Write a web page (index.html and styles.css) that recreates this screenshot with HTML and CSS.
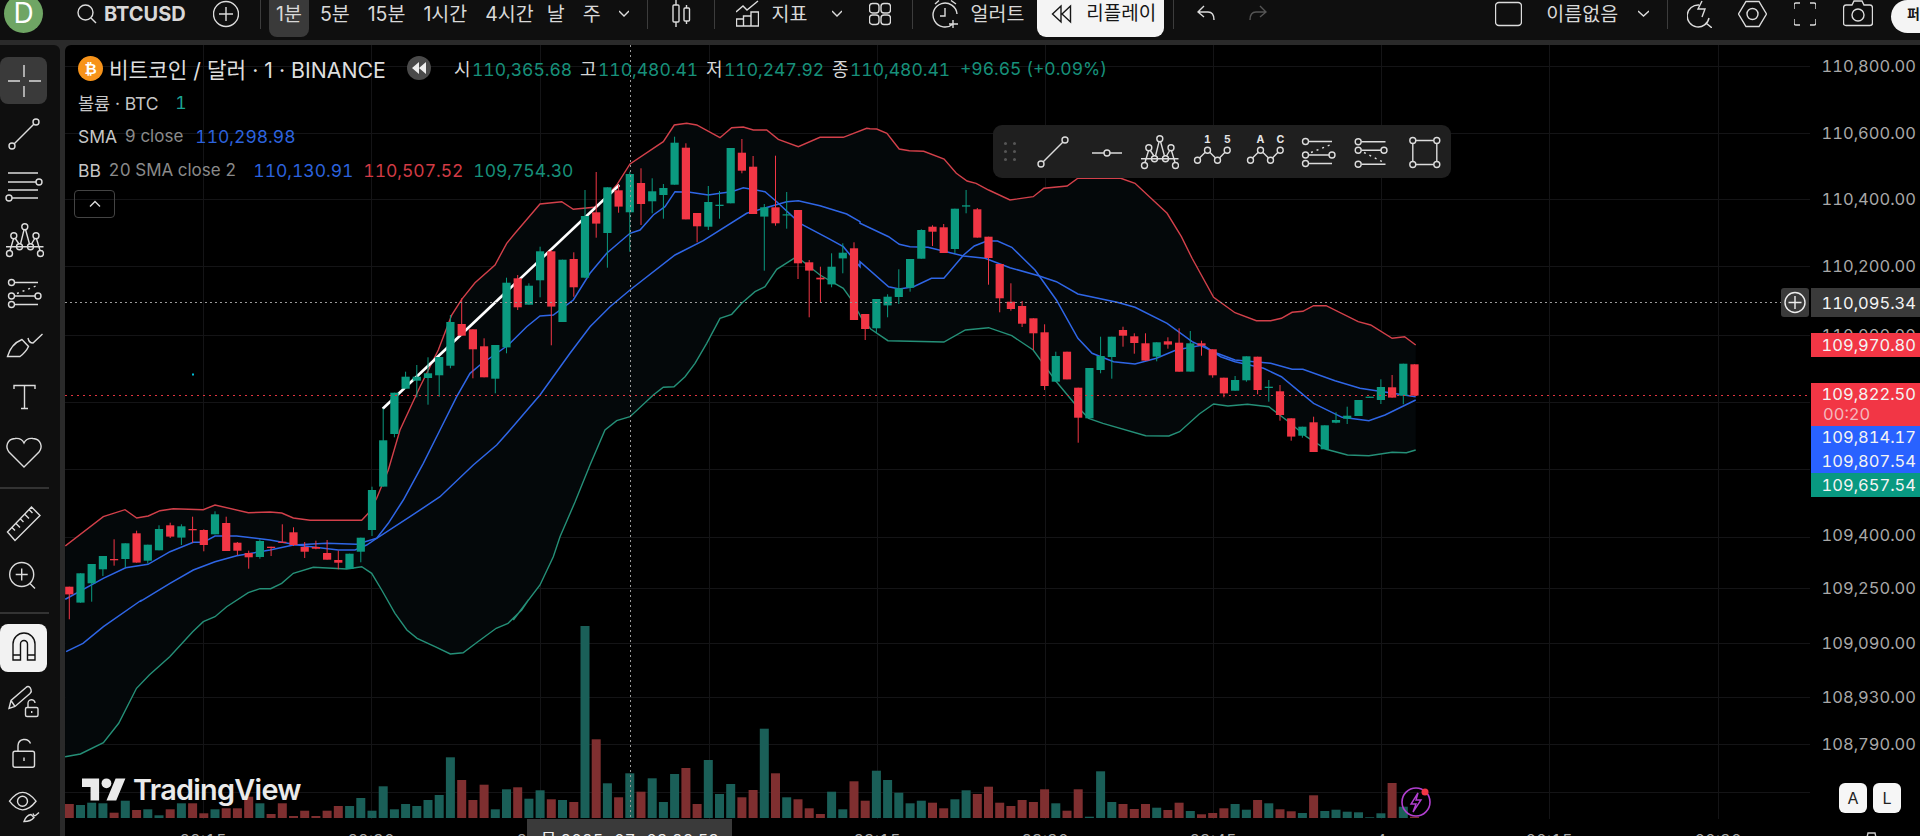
FILE: index.html
```html
<!DOCTYPE html>
<html lang="ko">
<head>
<meta charset="utf-8">
<title>BTCUSD</title>
<link rel="stylesheet" href="styles.css">
</head>
<body>
<svg class="defs" width="0" height="0" aria-hidden="true">
  <symbol id="s-line" viewBox="0 0 40 40"><path d="M10 30 30 10"/><circle cx="8" cy="32" r="3"/><circle cx="32" cy="8" r="3"/></symbol>
  <symbol id="s-crown" viewBox="0 0 40 40"><path d="M2 26.8H39.500M6 30.500 9.500 18.800M11 18 15 24M16.500 24 20 9.800M21.600 9.800 25.500 24M27.500 24 31 18M32.500 18.800 36 30.500"/><circle cx="20.800" cy="6.800" r="3"/><circle cx="9.800" cy="15.800" r="3"/><circle cx="32" cy="15.800" r="3"/><circle cx="15.500" cy="26.800" r="3"/><circle cx="26.500" cy="26.800" r="3"/><circle cx="5.500" cy="33.500" r="3"/><circle cx="36.500" cy="33.500" r="3"/></symbol>
  <symbol id="s-chan" viewBox="0 0 40 40"><path d="M10.500 9.500H34M10.500 23H31M10.500 31.500H34"/><path class="dotted" d="M13 20.500 33 12.500"/><circle cx="7.500" cy="9.500" r="3"/><circle cx="7.500" cy="23" r="3"/><circle cx="34" cy="23" r="3"/><circle cx="7.500" cy="31.500" r="3"/></symbol>
</svg>

<header class="topbar">
  <div class="avatar">D</div>
  <svg class="ic-top w20 ml34" viewBox="0 0 20 28"><circle cx="8.500" cy="12.500" r="7.500"/><path d="M14 18 19 23"/></svg>
  <div class="tb tb-symbol ml7">BTCUSD</div>
  <svg class="ic-top w26 ml27" viewBox="0 0 26 28"><circle cx="13" cy="14" r="12.500"/><path d="M13 7V21M6 14H20"/></svg>
  <i class="sep ml21"></i>
  <nav class="intervals ml8">
    <div class="tb iv iv-on">1분</div>
    <div class="tb iv">5분</div>
    <div class="tb iv">15분</div>
    <div class="tb iv">1시간</div>
    <div class="tb iv">4시간</div>
    <div class="tb iv iv-day">날</div>
    <div class="tb iv">주</div>
  </nav>
  <svg class="ic-top w10 ml11" viewBox="0 0 10 28"><path d="M0 11 5 16 10 11"/></svg>
  <i class="sep ml18"></i>
  <svg class="ic-top w19 ml24" viewBox="0 0 19 28"><path d="M4 0V5M4 22V27M14.500 5V8M14.500 21V24"/><rect x="1" y="5" width="6" height="17" rx="1"/><rect x="12" y="8" width="5.500" height="13" rx="1"/></svg>
  <i class="sep ml23"></i>
  <svg class="ic-top w23 ml21" viewBox="0 0 23 28"><path d="M0 12 7 6 11 10 22 1M.500 19H7.500V26H.500ZM7.500 16H15V26H7.500ZM15 12H22.500V26H15Z"/></svg>
  <div class="tb ml13">지표</div>
  <svg class="ic-top w10 ml24" viewBox="0 0 10 28"><path d="M0 11 5 16 10 11"/></svg>
  <svg class="ic-top w22 ml27" viewBox="0 0 22 28"><rect x=".500" y="3.500" width="9.500" height="9.500" rx="3"/><rect x="12" y="3.500" width="9.500" height="9.500" rx="3"/><rect x=".500" y="15" width="9.500" height="9.500" rx="3"/><rect x="12" y="15" width="9.500" height="9.500" rx="3"/></svg>
  <i class="sep ml21"></i>
  <svg class="ic-top w27 ml19" viewBox="0 0 27 28"><path d="M21 24A12 12 0 1 1 25 14M13 8V16H8M3 4 7 .500M19 .500 24 4M21 20V28M17 24H26"/></svg>
  <div class="tb ml12">얼러트</div>
  <div class="replay ml13">
    <svg class="ic-dark" width="21" height="28" viewBox="0 0 21 28"><path d="M10 6 1.500 14 10 22ZM19.500 6 11 14 19.500 22Z"/></svg>
    <span>리플레이</span>
  </div>
  <i class="sep ml9"></i>
  <svg class="ic-top w18 ml23" viewBox="0 0 18 28"><path d="M7 6 1 12 7 17M1 12H11Q17 12 17 20"/></svg>
  <svg class="ic-top ic-dim w18 ml34" viewBox="0 0 18 28"><path d="M11 6 17 12 11 17M17 12H7Q1 12 1 20"/></svg>
  <svg class="ic-top w27 ml228" viewBox="0 0 27 28"><rect x=".500" y="2.500" width="26" height="23" rx="3.500"/></svg>
  <div class="tb ml24">이름없음</div>
  <svg class="ic-top w11 ml20" viewBox="0 0 11 28"><path d="M0 11 5.500 16 11 11"/></svg>
  <i class="sep ml18"></i>
  <svg class="ic-top w25 ml19" viewBox="0 0 25 28"><path d="M12 5A11 11 0 1 0 22 18M19 23 25 28M15 1 11 9H18L15 17"/></svg>
  <svg class="ic-top w29 ml26" viewBox="0 0 29 28"><path d="M8 1.500H21L28.500 14 21 26.500H8L.500 14Z"/><circle cx="14.500" cy="14" r="5.500"/></svg>
  <svg class="ic-top w22 ml27" viewBox="0 0 22 28"><path d="M0 9V5Q0 3 2 3H6M16 3H20Q22 3 22 5V9M22 19V23Q22 25 20 25H16M6 25H2Q0 25 0 23V19"/></svg>
  <svg class="ic-top w30 ml27" viewBox="0 0 30 28"><path d="M3 5H9L11 1H19L21 5H27Q29.500 5 29.500 8V23Q29.500 25.500 27 25.500H3Q.500 25.500 .500 23V8Q.500 5 3 5Z"/><circle cx="15" cy="15" r="6"/></svg>
  <div class="publish ml18">퍼블리시</div>
</header>

<div class="workspace">
  <aside class="tools">
    <div class="tool tool-on"><svg class="tool-ic" viewBox="0 0 47 47"><path d="M24 8V20M24 29V40M8 24H20M29 24H41"/></svg></div>
    <div class="tool"><svg class="ic40"><use href="#s-line"/></svg></div>
    <div class="tool"><svg class="tool-ic tall" viewBox="0 0 47 53"><path d="M8 13H38M8 22H36M8 30H38M12 38H38"/><circle cx="39" cy="22" r="3"/><circle cx="9" cy="38" r="3"/></svg></div>
    <div class="tool"><svg class="ic40"><use href="#s-crown"/></svg></div>
    <div class="tool"><svg class="ic40"><use href="#s-chan"/></svg></div>
    <div class="tool"><svg class="tool-ic tall" viewBox="0 0 47 53"><path d="M7.500 37.500Q11 25 22 20.500L28.500 27.500Q26 33 20 37.500ZM28 19Q29 24 33 24L42.500 15"/></svg></div>
    <div class="tool"><svg class="tool-ic tall" viewBox="0 0 47 53"><path d="M14 17V13.500H35V17M24.500 13.500V36.500M21 36.500H28"/></svg></div>
    <div class="tool tool-short"><svg class="tool-ic short" viewBox="0 0 47 44"><path d="M24 40 9 25C5 20 7 12 15 11.500 19 11 22.500 13 24 16 25.500 13 29 11 33 11.500 41 12 43 20 39 25Z"/></svg></div>
    <i class="rule rule-a"></i>
    <div class="tool tool-b"><svg class="tool-ic tall" viewBox="0 0 47 52"><path d="M7.500 34.500 31.500 9.500 40 18 15 43ZM12 30 15 33M16 26 20 30M20.500 21.500 23.500 24.500M25 17 29 21M29.500 12.500 32.500 15.500"/></svg></div>
    <div class="tool tool-b"><svg class="tool-ic tall" viewBox="0 0 47 52"><circle cx="21.700" cy="25" r="12"/><path d="M30 34 35 39M21.700 19V31M15.700 25H27.700"/></svg></div>
    <i class="rule rule-b"></i>
    <div class="tool tool-magnet"><svg class="tool-ic mag" viewBox="0 0 47 48"><path d="M13 36V20A11 11 0 0 1 35 20V36H27.500V20A3.500 3.500 0 0 0 20.500 20V36ZM13 31H20.500M27.500 31H35"/></svg></div>
    <div class="tool tool-c"><svg class="tool-ic tall" viewBox="0 0 47 52"><path d="M9 32 11 24 26 11Q28 9 30 11L31 13Q32 15 30 17L15 30ZM11 24 15 30"/><rect x="25.500" y="31" width="12.500" height="9" rx="1.500"/><path d="M28 31V27A3.500 3.500 0 0 1 35 26.500M31.700 34.500V36.500"/></svg></div>
    <div class="tool tool-b"><svg class="tool-ic tall" viewBox="0 0 47 52"><rect x="13" y="22.700" width="21.500" height="16" rx="2"/><path d="M18 22.700V17A6.500 6.500 0 0 1 30.500 15M24 29V32.500"/></svg></div>
    <div class="tool tool-b"><svg class="tool-ic tall" viewBox="0 0 47 52"><path d="M9.500 20.700Q22.500 3 36 20.700 22.500 38 9.500 20.700Z"/><circle cx="22.500" cy="20.700" r="5"/><path d="M24 41Q26 35 31 34L34 37Q31 41 24 41ZM33 33Q34 36 35.500 35L39 32"/></svg></div>
  </aside>

  <main class="chart-pane">
    <svg id="chart" class="chart" viewBox="65 45 1855 791" width="1855" height="791"></svg>

    <section class="legend">
      <div class="legend-row legend-main">
        <span class="coin">₿</span>
        <span class="pair">비트코인 / 달러 · 1 · BINANCE</span>
        <span class="replay-dot"><svg width="14" height="12" viewBox="0 0 14 12"><path d="M7 0 0 6 7 12ZM14 0 7 6 14 12Z"/></svg></span>
        <span class="ohlc"><b>시</b><em class="num green">110,365.68</em></span>
        <span class="ohlc"><b>고</b><em class="num green">110,480.41</em></span>
        <span class="ohlc"><b>저</b><em class="num green">110,247.92</em></span>
        <span class="ohlc"><b>종</b><em class="num green">110,480.41</em></span>
        <em class="num green change">+96.65 (+0.09%)</em>
      </div>
      <div class="legend-row">볼륨 · BTC <em class="num teal val-a">1</em></div>
      <div class="legend-row">SMA <span class="muted">9 close</span><em class="num blue val-sma">110,298.98</em></div>
      <div class="legend-row">BB <span class="muted">20 SMA close 2</span><em class="num blue val-first val-c">110,130.91</em><em class="num red val-c">110,507.52</em><em class="num green val-c">109,754.30</em></div>
      <div class="collapse"><svg width="12" height="8" viewBox="0 0 12 8"><path d="M1 6.500 6 1.500 11 6.500"/></svg></div>
    </section>

    <div class="drawbar">
      <div class="grip"><i></i><i></i><i></i><i></i><i></i><i></i></div>
      <div class="db"><svg class="ic40"><use href="#s-line"/></svg></div>
      <div class="db"><svg class="ic40" viewBox="0 0 40 40"><path d="M6 21H18M24 21H36"/><circle cx="21" cy="21" r="3"/></svg></div>
      <div class="db"><svg class="ic40"><use href="#s-crown"/></svg></div>
      <div class="db"><svg class="ic40" viewBox="0 0 40 40"><path d="M7.500 26 13.500 20M17.500 20 23.500 26M27.500 26 33.200 20"/><circle cx="5.500" cy="28.200" r="3"/><circle cx="15.500" cy="18.200" r="3"/><circle cx="25.500" cy="28.200" r="3"/><circle cx="35.200" cy="18.200" r="3"/><text class="db-label" x="15.500" y="10.500">1</text><text class="db-label" x="35.500" y="10.500">5</text></svg></div>
      <div class="db"><svg class="ic40" viewBox="0 0 40 40"><path d="M7.500 26 13.500 20M17.500 20 23.500 26M27.500 26 33.200 20"/><circle cx="5.500" cy="28.200" r="3"/><circle cx="15.500" cy="18.200" r="3"/><circle cx="25.500" cy="28.200" r="3"/><circle cx="35.200" cy="18.200" r="3"/><text class="db-label" x="15.500" y="10.500">A</text><text class="db-label" x="35.500" y="10.500">C</text></svg></div>
      <div class="db"><svg class="ic40"><use href="#s-chan"/></svg></div>
      <div class="db"><svg class="ic40" viewBox="0 0 40 40"><path d="M10.500 9.800H34.500M10.500 18.200H30M10.500 32.200H34.500"/><path class="dotted" d="M13 20.500 33 30.500"/><circle cx="7.200" cy="9.800" r="3"/><circle cx="7.200" cy="18.200" r="3"/><circle cx="33" cy="18.200" r="3"/><circle cx="7.200" cy="32.200" r="3"/></svg></div>
      <div class="db"><svg class="ic40" viewBox="0 0 40 40"><path d="M11.800 8.500H29.800M11.800 32.500H29.800M8.800 11.500V29.500M32.800 11.500V29.500"/><circle cx="8.800" cy="8.500" r="3"/><circle cx="32.800" cy="8.500" r="3"/><circle cx="8.800" cy="32.500" r="3"/><circle cx="32.800" cy="32.500" r="3"/></svg></div>
    </div>

    <div class="watermark">
      <svg class="tv-logo" width="44" height="24" viewBox="0 4 36 19"><path d="M14 22H7V11H0V4h14v18zM28 22h-8l7.500-18h8L28 22z"/><circle cx="20" cy="8" r="4"/></svg>
      <span>TradingView</span>
    </div>

    <div class="scale-btns"><span>A</span><span>L</span></div>
  </main>
</div>
<script src="chart.js"></script>
</body>
</html>
```
FILE: styles.css
```css
* { box-sizing: border-box; }
html, body { margin: 0; height: 100%; }
body {
  width: 1920px; height: 836px; overflow: hidden;
  background: #2a2a2a; color: #d6d6d6;
  font-family: Inter, "Noto Sans CJK KR", "Noto Sans", sans-serif;
  font-variant-numeric: tabular-nums;
  display: flex; flex-direction: column; gap: 5px;
}
em { font-style: normal; }
.defs { position: absolute; }
.defs, .ic40, .tool-ic, .ic-top { fill: none; stroke: #dcdcdc; stroke-width: 1.4; }
.dotted { stroke-dasharray: 2 4; }

/* Top bar */
.topbar { flex: 0 0 40px; height: 40px; display: flex; align-items: flex-start; background: #0f0f0f; overflow: hidden; }
.topbar > * { flex-shrink: 0; }
.avatar { width: 39px; height: 39px; margin: -6px 0 0 4px; border-radius: 50%; background: #6fa564; color: #fff; font-size: 28px; line-height: 39px; text-align: center; }
.tb { height: 37px; line-height: 28px; font-size: 19.5px; color: #d8d8d8; font-variant-numeric: normal; }
.tb-symbol { font-weight: 700; font-size: 20px; width: 82px; }
.ic-top { height: 28px; display: block; }
.ic-dim { stroke: #555; }
.w10 { width: 10px; } .w11 { width: 11px; } .w18 { width: 18px; } .w19 { width: 19px; } .w20 { width: 20px; } .w22 { width: 22px; }
.w23 { width: 23px; } .w25 { width: 25px; } .w26 { width: 26px; } .w27 { width: 27px; } .w29 { width: 29px; } .w30 { width: 30px; }
.ml7 { margin-left: 7px; } .ml8 { margin-left: 8px; } .ml9 { margin-left: 9px; } .ml11 { margin-left: 11px; } .ml12 { margin-left: 12px; } .ml13 { margin-left: 13px; }
.ml18 { margin-left: 18px; } .ml19 { margin-left: 19px; } .ml20 { margin-left: 20px; } .ml21 { margin-left: 21px; } .ml23 { margin-left: 23px; } .ml24 { margin-left: 24px; }
.ml26 { margin-left: 26px; } .ml27 { margin-left: 27px; } .ml34 { margin-left: 34px; } .ml228 { margin-left: 228px; }
.sep { width: 1px; height: 29px; background: #3c3c3c; display: block; }
.intervals { display: flex; gap: 4px; }
.iv { padding: 0 7px; }
.iv-day { padding-left: 2px; }
.iv-on { background: #3a3a3a; border-radius: 0 0 8px 8px; }
.replay { width: 127px; height: 37px; background: #f4f4f4; border-radius: 0 0 9px 9px; color: #161616; font-size: 19px; line-height: 28px; display: flex; align-items: flex-start; padding-left: 14px; gap: 14px; white-space: nowrap; }
.ic-dark { fill: none; stroke: #161616; stroke-width: 1.4; display: block; }
.publish { width: 60px; height: 33px; padding-left: 16px; border-radius: 17px 0 0 17px; background: #f4f4f4; color: #161616; font-size: 14px; font-weight: 700; line-height: 28px; white-space: nowrap; overflow: hidden; }

/* Left toolbar */
.workspace { flex: 1; display: flex; gap: 5px; min-height: 0; }
.tools { flex: 0 0 60px; background: #0f0f0f; border-radius: 0 6px 0 0; padding-top: 12px; display: flex; flex-direction: column; }
.tool { width: 47px; height: 53px; display: flex; align-items: center; justify-content: center; flex-shrink: 0; }
.tool-on { height: 47px; background: #3a3a3a; border-radius: 8px; margin-bottom: 3px; }
.tool-short { height: 44px; margin-top: 2px; }
.tool-b { height: 52px; }
.tool-c { height: 52px; margin-top: 4px; }
.tool-magnet { height: 48px; background: #f2f2f2; border-radius: 8px; }
.tool-ic { width: 47px; height: 47px; display: block; flex-shrink: 0; }
.tool-ic.tall { height: 53px; }
.tool-ic.short { height: 44px; }
.tool-ic.mag { height: 48px; stroke: #111; }
.ic40 { width: 40px; height: 40px; display: block; flex-shrink: 0; overflow: visible; }
.rule { display: block; height: 2px; background: #333; width: 49px; flex-shrink: 0; }
.rule-a { margin: 16px 0 8px; }
.rule-b { margin: 11px 0 10px; }

/* Chart */
.chart-pane { position: relative; flex: 1; background: #000; border-radius: 6px 0 0 0; overflow: hidden; }
.chart { display: block; }
.axis-text { font-size: 16.5px; fill: #a8a8a8; text-anchor: end; }
.tag-text { font-size: 16.5px; fill: #f4f4f4; text-anchor: end; }
.tag-sub { font-size: 16.5px; fill: #f4b8bd; }
.time-text { font-size: 16.5px; fill: #a8a8a8; text-anchor: middle; }
.time-tip { font-size: 16.5px; fill: #f0f0f0; }

/* Legend */
.legend { position: absolute; left: 13px; top: 6px; display: flex; flex-direction: column; font-size: 17.5px; color: #c6c6c6; }
.legend-row { height: 34px; display: flex; align-items: center; white-space: pre; }
.num { font-size: 17.5px; }
.coin { width: 25px; height: 25px; border-radius: 50%; background: #f7931a; color: #fff; font: 700 15px/25px "Liberation Sans", sans-serif; text-align: center; flex-shrink: 0; }
.pair { font-size: 21.3px; margin-left: 6px; color: #dedede; width: 298px; font-variant-numeric: normal; }
.replay-dot { width: 24px; height: 24px; border-radius: 50%; background: #4a4a4a; display: flex; align-items: center; justify-content: center; fill: #eee; flex-shrink: 0; }
.ohlc { display: flex; align-items: baseline; margin-left: 23px; }
.ohlc + .ohlc { margin-left: 0; }
.ohlc b { font-weight: 400; font-size: 18px; color: #d6d6d6; width: 18px; }
.ohlc em { width: 108px; }
.green { color: #17907a; }
.teal { color: #1ba493; }
.blue { color: #2c62dd; }
.red { color: #d23b45; }
.muted { color: #8a8a8a; margin-left: 3px; font-size: 17px; }
.val-a { margin-left: 12px; }
.val-sma { margin-left: 12px; }
.val-first { margin-left: 17px; }
.val-c { width: 110px; }
.change { margin-left: 2px; }
.collapse { width: 41px; height: 28px; margin: 3px 0 0 -4px; border: 1px solid #444; border-radius: 4px; display: flex; align-items: center; justify-content: center; fill: none; stroke: #dcdcdc; stroke-width: 1.4; }

/* Floating drawing toolbar */
.drawbar { position: absolute; left: 928px; top: 80px; width: 458px; height: 53px; background: #1f1f1f; border-radius: 9px; display: flex; align-items: center; }
.grip { width: 33px; padding-left: 11px; display: grid; grid-template-columns: 3px 3px; gap: 5px 6px; }
.grip i { width: 3px; height: 3px; border-radius: 50%; background: #555; display: block; }
.db { width: 53px; display: flex; justify-content: center; }
.db-label { font-size: 10.5px; font-weight: 700; fill: #e6e6e6; stroke: none; text-anchor: middle; }

/* Watermark and scale buttons */
.watermark { position: absolute; left: 17px; top: 730px; display: flex; align-items: center; gap: 7px; color: #eaeaea; fill: #eaeaea; font-size: 28.8px; font-weight: 600; letter-spacing: -.7px; line-height: 30px; }
.tv-logo { display: block; }
.scale-btns { position: absolute; left: 1774px; top: 738px; display: flex; gap: 6px; }
.scale-btns span { width: 28px; height: 30px; background: #f6f6f6; border-radius: 6px; color: #222; font-size: 16px; line-height: 30px; text-align: center; }
```
FILE: chart.js
```javascript
// Chart drawn from data traced off the price/time scales.
const NS = 'http://www.w3.org/2000/svg';
const chart = document.getElementById('chart');
const G = '#0b9a80', R = '#f23645';
const VG = '#1a5f58', VR = '#7f2f30';

function el(tag, attrs, text) {
  const n = document.createElementNS(NS, tag);
  for (const k in attrs) n.setAttribute(k, attrs[k]);
  if (text != null) n.textContent = text;
  chart.appendChild(n);
  return n;
}

// Each block: y origin, then [colour, bodyTop, bodyBottom, wickTop, wickBottom] in 1/3 px
const blocks = [
  [330, [[R,770,793,770,868],[G,730,818],[G,702,760,702,815],[G,678,718,678,738],[R,687,691,628,707],[G,640,687,640,712],[R,610,698,602,698],[G,644,692,644,700],[G,597,661,586,661],[R,586,620,578,624],
         [G,589,623,583,645],[R,597,601,560,638],[R,600,645,598,664],[G,553,613,544,613],[R,579,663,560,663],[R,638,662,636,675],[R,669,682,662,716],[G,633,681,628,686],[R,650,654,650,678],[R,635,637,583,637],
         [R,607,645,592,648],[R,651,665,636,684],[R,651,656,632,658],[R,669,689,630,689],[R,690,698,662,718],[G,671,717],[G,623,665,623,697],[G,480,600,470,618],[G,331,470,236,470],[G,188,312,188,322]]],
  [110, [[G,800,836,785,836],[G,800,812,765,862],[G,790,804,742,884],[G,741,796,741,860],[G,636,767,615,775],[R,642,677,565,677],[R,658,718,658,805],[R,709,802,685,802],[G,705,806,705,850],[G,518,712,503,730],
         [R,505,592,495,600],[G,527,584,520,584],[G,424,511,410,562],[R,424,590,420,706],[G,449,636],[R,447,532,427,560],[G,318,503,240,505],[R,307,341,186,383],[G,232,369,232,473],[R,241,290,225,308],
         [G,192,307,185,425],[R,219,282,175,345],[G,244,274,205,310],[G,234,255,222,326],[G,98,224,80,224],[R,113,328,100,328],[R,309,349,309,397],[G,276,350,228,360],[G,284,288,243,326],[G,114,280],
         [R,128,182,87,190],[R,170,312,138,312],[G,292,320,282,482],[R,292,340,137,347],[G,313,316,246,356],[R,300,460,300,507],[R,457,482,450,622],[R,503,508,470,576],[G,470,523,430,532],[G,428,445,400,490],
         [R,415,630,397,630],[R,612,657,612,690]]],
  [170, [[G,387,475,387,490],[G,380,406,373,442],[G,355,381,298,402],[G,267,353,267,365],[G,180,266,178,266],[R,170,185,166,228],[R,172,249,162,249],[G,116,237,116,250],[G,106,110,60,130],[R,118,203,114,203],
         [R,200,264,200,344],[R,282,385,282,427],[R,395,417,340,422],[R,408,461,393,471],[R,445,490,445,540],[R,487,648,463,660],[G,558,635,545,635],[R,545,628],[R,653,743,653,818],[G,594,745],
         [G,558,600,500,610],[G,500,561,500,626],[R,480,497,470,530],[R,499,519,490,551],[R,520,572,490,572],[G,517,560,517,574],[R,514,524,502,536],[R,518,605,475,605],[G,520,605,483,605],[R,520,527,512,557],
         [R,538,616,538,623],[R,623,670,623,682],[G,630,662,618,662],[G,559,631,559,635],[R,560,660,560,673],[G,650,654,630,695],[R,664,735,645,752],[R,745,800,745,812],[G,770,797,770,803],[R,757,846,740,846],
         [G,766,838],[G,750,758,727,760],[G,737,746,710,762],[G,690,738],[G,680,682],[G,651,690,628,702],[R,652,683,615,683],[G,581,677,581,703],[R,583,677]]]
];
const candles = [];
blocks.forEach(([y0, rows]) => rows.forEach(r => {
  const wt = r.length > 3 ? r[3] : r[1], wb = r.length > 3 ? r[4] : r[2];
  candles.push({ c: r[0], bt: y0 + r[1] / 3, bb: y0 + r[2] / 3, wt: y0 + wt / 3, wb: y0 + wb / 3 });
}));
const cx = i => 69.3 + 11.21 * i;

const volTops = [612,615,608,610,638,602,630,628,646,628,610,610,640,628,625,625,590,610,642,610,648,632,648,632,618,618,594,632,559,628,612,618,600,585,472,540,600,554,628,568,562,596,571,598,600,606,78,418,550,592,520,575,535,606,522,504,612,480,582,552,592,570,386,520,592,598,625,642,575,628,544,
  602,512,540,578,610,602,608,625,598,571,582,560,608,618,600,606,568,610,632,568,650,514,606,612,627,612,623,630,608,633,643,639,625,612,629,600,610,628,634,639,586,633,629,635,637,652,640,549,620,650];

// Traced curve segments, each in its own block of coordinates
const z10 = a => a.map(([x, y]) => [60 + x / 3, 330 + y / 3]);
const z11 = a => a.map(([x, y]) => [370 + x / 3, 110 + y / 3]);
const z12 = a => a.map(([x, y]) => [860 + x / 2.8, 170 + y / 3]);
const z2 = a => a.map(([x, y]) => [640 + x / 2.45, y / 3]);
const z7 = a => a.map(([x, y]) => [60 + x / 1.96, 600 + y / 3]);

const upper = [
  ...z10([[16,648],[130,560],[195,539],[230,564],[265,558],[300,542],[340,536],[430,539],[465,525],[565,548],[630,546],[665,549],[700,564],[750,571],[905,571],[925,550],[950,505],[985,420]]),
  ...z11([[90,960],[150,830],[205,720],[245,615],[275,568],[315,518],[375,465],[410,400],[435,370],[510,282],[575,275],[610,298],[680,291],[740,225],[780,162],[880,95],[913,45],[950,40],[980,45],[1050,83],[1085,53],[1120,51],[1150,60],[1190,60],[1225,88],[1285,110],[1350,82],[1420,82],[1490,55],[1500,56]]),
  ...z2([[580,387],[605,400],[635,447],[660,452],[695,454],[745,477],[775,520]]),
  ...z12([[300,33],[325,40],[360,60],[420,90],[485,80],[515,55],[580,48],[610,25],[730,25],[770,40],[860,130],[900,200],[930,265],[990,382],[1050,428],[1110,452],[1150,452],[1180,445],[1210,427],[1240,424],[1270,407],[1305,407],[1395,455],[1430,465],[1490,505],[1525,500],[1556,525]])
];
const lower = [
  ...z7([[10,470],[40,462],[85,428],[115,370],[150,265],[175,225],[215,170],[260,95]]),
  ...z10([[430,875],[465,860],[500,830],[565,788],[600,776],[632,776],[665,760],[700,730],[760,712],[860,717],[905,710],[935,730],[965,780],[1005,850]]),
  ...z7([[680,90],[700,115],[735,140],[765,162],[790,158],[815,130],[855,85],[878,70],[905,30],[918,0]]),
  ...z10([[1360,870],[1440,765],[1480,680],[1500,620]]),
  [575,502],[590,465],
  ...z11([[705,960],[740,932],[780,920],[850,855],[880,832],[912,830],[945,800],[975,760],[1010,700],[1050,625],[1085,613],[1115,580],[1155,545],[1185,530],[1220,478],[1280,440],[1300,455],[1350,495],[1420,535],[1445,570],[1475,625]]),
  ...z12([[30,477],[78,512],[235,516],[295,480],[360,473],[425,497],[485,540],[550,635],[600,700],[640,745],[680,760],[800,797],[865,798],[895,785],[950,732],[990,702],[1030,708],[1085,703],[1145,710],[1200,755],[1250,800],[1305,838],[1365,855],[1425,857],[1490,847],[1530,848],[1556,840]])
];
const sma = [
  ...z10([[16,808],[130,745],[197,713],[264,703],[330,665],[400,637],[430,637],[465,618],[530,618],[630,630],[700,643],[735,648],[835,660],[885,660],[920,645],[950,625],[985,580],[1030,510],[1090,400],[1140,300]]),
  ...z11([[260,860],[300,790],[330,765],[415,705],[470,650],[510,618],[550,615],[610,570],[660,490],[710,430],[780,370],[810,360],[850,315],[885,290],[915,245],[960,247],[1015,255],[1050,250],[1085,245],[1120,233],[1185,245],[1220,275],[1290,340],[1375,385],[1420,410],[1470,470]]),
  ...z12([[0,275],[80,350],[110,357],[150,350],[200,325],[235,325],[290,255],[320,228],[355,213],[385,213],[425,232],[490,300],[550,390],[610,505],[650,550],[710,575],[770,582],[830,565],[885,540],[960,525],[1010,560],[1050,575],[1130,595],[1180,620],[1270,700],[1350,742],[1425,752],[1470,735],[1556,690]])
];
const basis = [
  ...z7([[12,155],[45,130],[85,80],[160,0]]),
  ...z10([[240,815],[330,760],[400,720],[465,695],[530,677],[630,660],[700,645],[800,640],[890,643],[950,625],[1050,560],[1140,500],[1240,405],[1310,345]]),
  ...z11([[420,960],[510,855],[600,730],[660,650],[720,590],[780,540],[915,435],[1000,392],[1130,310],[1250,275],[1285,272],[1350,287],[1430,312],[1470,335]]),
  ...z12([[0,160],[80,200],[110,223],[140,230],[190,232],[290,258],[350,265],[420,293],[500,317],[550,335],[610,372],[720,397],[770,412],[860,460],[930,515],[1000,550],[1050,570],[1150,580],[1210,598],[1240,598],[1330,632],[1400,655],[1556,680]])
];
const toPts = a => a.map(p => p[0].toFixed(1) + ',' + p[1].toFixed(1)).join(' ');

// Grid
const gridY = [66,133,199,266,335,402,469,537,588,643,697,744,792];
const gridX = [203,371,540,709,877,1045,1213,1381,1549,1718];
gridY.forEach(y => el('line', { x1: 65, x2: 1810, y1: y + .5, y2: y + .5, stroke: '#141416' }));
gridX.forEach(x => el('line', { x1: x + .5, x2: x + .5, y1: 45, y2: 819, stroke: '#141416' }));

// Bollinger band fill and lines
el('polygon', { points: toPts(upper.concat(lower.slice().reverse())), fill: '#04080a' });
[[upper, '#d2404a', 1.4], [lower, '#259078', 1.4], [basis, '#2f66e6', 1.5], [sma, '#2f66e6', 1.5]].forEach(([p, c, w]) =>
  el('polyline', { points: toPts(p), fill: 'none', stroke: c, 'stroke-width': w }));

// Trendline drawing
el('line', { x1: 382.7, y1: 408.7, x2: 619.3, y2: 185, stroke: '#fff', 'stroke-width': 2.6 });

// Volume
volTops.forEach((t, i) => {
  const y = 600 + t / 3;
  el('rect', { x: (cx(i) - 4.5).toFixed(1), y: y.toFixed(1), width: 9, height: (818 - y).toFixed(1), fill: candles[i].c === G ? VG : VR });
});

// Candles
candles.forEach((k, i) => {
  const x = cx(i);
  el('line', { x1: x.toFixed(1), x2: x.toFixed(1), y1: k.wt.toFixed(1), y2: k.wb.toFixed(1), stroke: k.c, 'stroke-width': 1 });
  el('rect', { x: (x - 4.1).toFixed(1), y: k.bt.toFixed(1), width: 8.2, height: Math.max(k.bb - k.bt, 1.2).toFixed(1), fill: k.c });
});

// Small marker
el('rect', { x: 192, y: 373.5, width: 2, height: 2, fill: '#00bcd4' });

// Crosshair and last price line
el('line', { x1: 630.5, x2: 630.5, y1: 45, y2: 819, stroke: '#9a9a9a', 'stroke-dasharray': '2 3' });
el('line', { x1: 65, x2: 1781, y1: 302.5, y2: 302.5, stroke: '#9a9a9a', 'stroke-dasharray': '2 3' });
el('line', { x1: 65, x2: 1811, y1: 395.5, y2: 395.5, stroke: '#e0343f', 'stroke-dasharray': '2 4' });

// Price scale
[['110,800.00',72],['110,600.00',139],['110,400.00',205],['110,200.00',272],['110,000.00',341],['109,400.00',541],['109,250.00',594],['109,090.00',649],['108,930.00',703],['108,790.00',750]]
  .forEach(([t, y]) => el('text', { class: 'axis-text', x: 1916, y }, t));

el('rect', { x: 1781, y: 288, width: 28, height: 29, rx: 3, fill: '#3a3a3a' });
el('rect', { x: 1811, y: 288, width: 109, height: 29, fill: '#3a3a3a' });
el('circle', { cx: 1795, cy: 302.5, r: 10, fill: 'none', stroke: '#eee', 'stroke-width': 1.4 });
el('path', { d: 'M1795 296v13M1788.500 302.500h13', stroke: '#eee', 'stroke-width': 1.4 });
el('text', { class: 'tag-text', x: 1916, y: 308.5 }, '110,095.34');

el('rect', { x: 1811, y: 333, width: 109, height: 24, fill: R });
el('text', { class: 'tag-text', x: 1916, y: 350.5 }, '109,970.80');
el('rect', { x: 1811, y: 383, width: 109, height: 43, fill: R });
el('text', { class: 'tag-text', x: 1916, y: 400 }, '109,822.50');
el('text', { class: 'tag-sub', x: 1823, y: 420 }, '00:20');
el('rect', { x: 1811, y: 426, width: 109, height: 47, fill: '#2962ff' });
el('text', { class: 'tag-text', x: 1916, y: 443 }, '109,814.17');
el('text', { class: 'tag-text', x: 1916, y: 467 }, '109,807.54');
el('rect', { x: 1811, y: 473, width: 109, height: 24, fill: '#089981' });
el('text', { class: 'tag-text', x: 1916, y: 491 }, '109,657.54');

// Time scale
[['22:15',203],['22:30',371],['22:45',540],['23:00',709],['23:15',877],['23:30',1045],['23:45',1213],['4',1381],['00:15',1549],['00:30',1718]]
  .forEach(([t, x]) => el('text', { class: 'time-text', x, y: 846 }, t));
el('rect', { x: 527, y: 819, width: 205, height: 20, fill: '#3a3a3a' });
el('text', { class: 'time-tip', x: 541, y: 846 }, '목 2025-07-03  22:53');

// Lightning badge
el('circle', { cx: 1416, cy: 802, r: 14, fill: 'none', stroke: '#b13fd0', 'stroke-width': 1.6 });
el('path', { d: 'M1418 793 1411 804H1416L1413 812 1421 800H1416Z', fill: 'none', stroke: '#b13fd0', 'stroke-width': 1.4 });
el('circle', { cx: 1425, cy: 792, r: 3.5, fill: R });

// Time axis settings glyph
el('path', { d: 'M1866 842 1868 833H1875L1877 842', fill: 'none', stroke: '#ccc', 'stroke-width': 1.4 });
```
